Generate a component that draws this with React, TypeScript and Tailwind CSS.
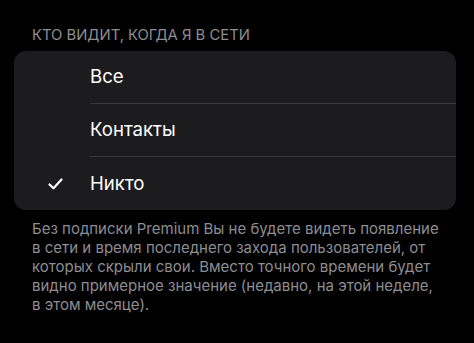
import React from "react";

const options = [
  { label: "Все", checked: false },
  { label: "Контакты", checked: false },
  { label: "Никто", checked: true },
];

export default function App() {
  return (
    <div
      className="w-[474px] h-[343px] bg-black overflow-hidden"
      style={{ fontFamily: "Inter, 'Noto Sans', sans-serif" }}
    >
      <div className="pt-[26px] pl-[32px] text-[14.8px] leading-[18px] text-[#8d8d92] uppercase">
        Кто видит, когда я в сети
      </div>
      <div className="mt-[7px] ml-[14px] w-[442px] rounded-[12px] bg-[#1c1c1e] overflow-hidden">
        {options.map((o, i) => (
          <div key={o.label} className="flex h-[53px] items-stretch">
            <div className="w-[76px] flex items-center justify-center pl-[6px]">
              {o.checked && (
                <svg width="15" height="12" viewBox="0 0 15 12" fill="none">
                  <path
                    d="M1.5 6.5 L5.5 10.3 L13.5 1.5"
                    stroke="#ffffff"
                    strokeWidth="2.2"
                    strokeLinecap="round"
                    strokeLinejoin="round"
                  />
                </svg>
              )}
            </div>
            <div
              className={
                "flex-1 flex items-center " +
                (i < options.length - 1 ? "border-b border-[#38383a]" : "")
              }
            >
              <span className="text-[18.6px] text-white">{o.label}</span>
            </div>
          </div>
        ))}
      </div>
      <div className="mt-[9px] px-[32px] text-[15px] leading-[19px] text-[#8d8d92]">
        Без подписки Premium Вы не будете видеть появление в сети и время последнего захода
        пользователей, от которых скрыли свои. Вместо точного времени будет видно примерное
        значение (недавно, на этой неделе, в этом месяце).
      </div>
    </div>
  );
}
